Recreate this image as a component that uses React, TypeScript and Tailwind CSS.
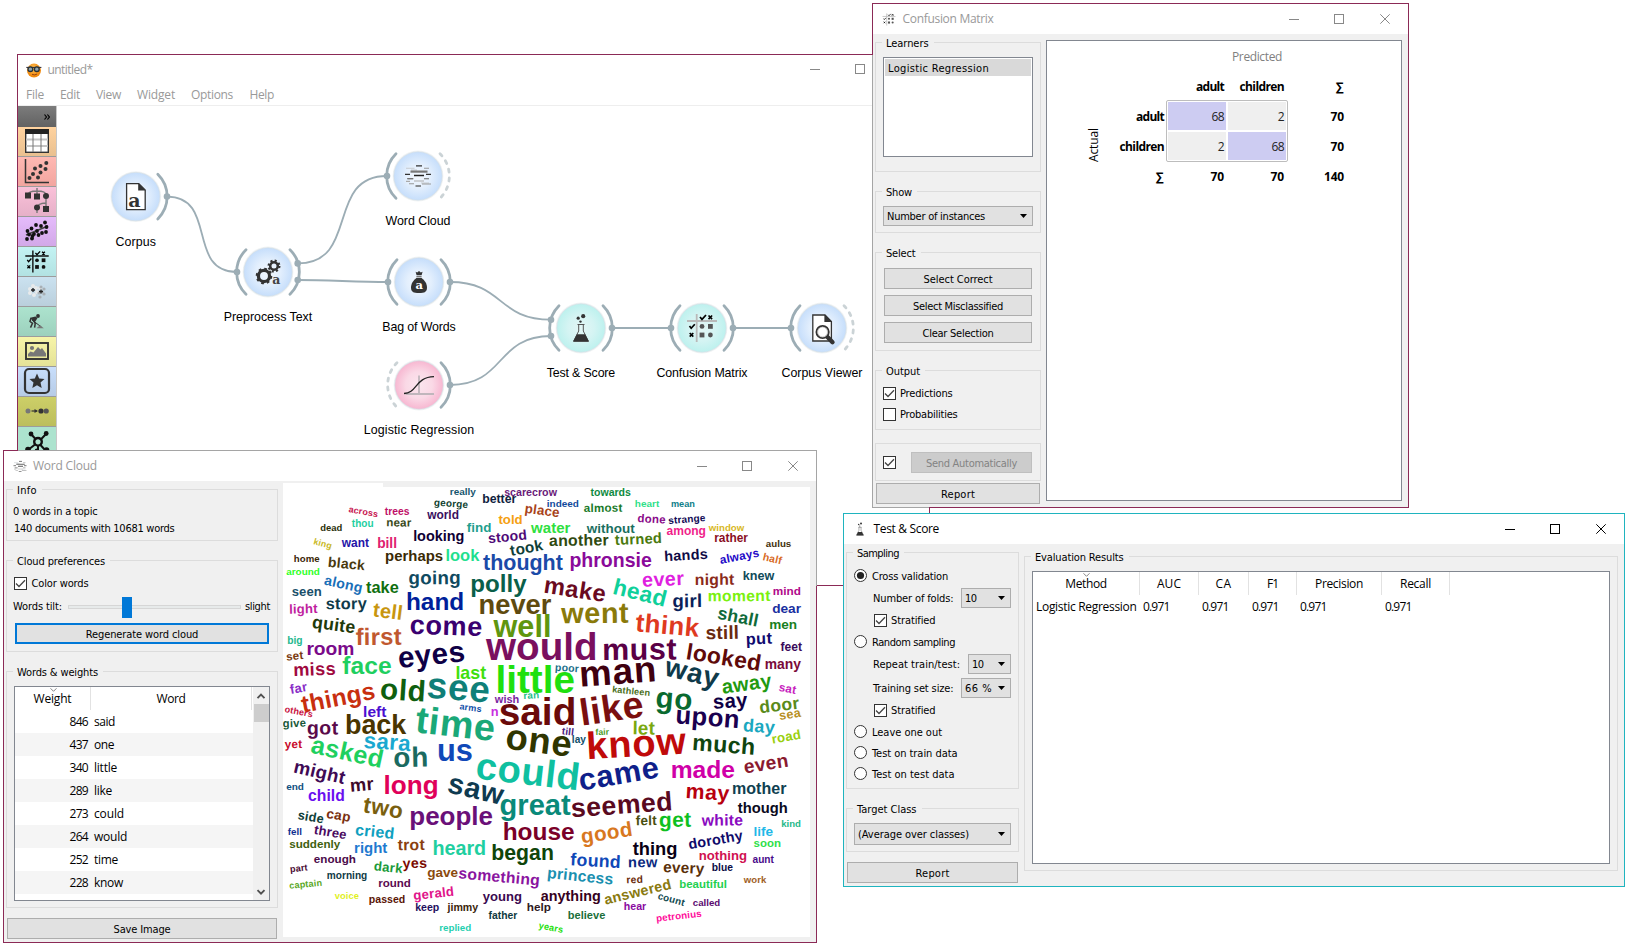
import React, { useLayoutEffect, useRef, useState } from "react";

/* --drop is the extra room above a line, which sets how low it sits in its row. */
const TAHOMA = "font-['DejaVu_Sans_Condensed','DejaVu_Sans',sans-serif] text-[11px] [--drop:2px]";
const SEGOE = "font-['Open_Sans','Noto_Sans',sans-serif] text-[12px] [--drop:0px]";

/* A single line of text whose tracking is adjusted so that it spans w pixels. */
function T({ w, children, className = "" }: { w: number; children: string; className?: string }) {
  const ref = useRef<HTMLSpanElement>(null);
  const [spacing, setSpacing] = useState<number | null>(null);
  useLayoutEffect(() => {
    const el = ref.current;
    if (!el || spacing !== null) return;
    setSpacing((w - parseFloat(getComputedStyle(el).width)) / children.length);
  }, [w, children, spacing]);
  return (
    <span ref={ref} className={`inline-block pt-(--drop) whitespace-pre ${className}`} style={{ letterSpacing: `${spacing ?? 0}px` }}>
      {children}
    </span>
  );
}

function Group({ title, tw, className, children }: { title?: string; tw?: number; className: string; children?: React.ReactNode }) {
  return (
    <div className={`flex shrink-0 flex-col items-start border border-[#dcdcdc] ${className}`}>
      {title && (
        <div className="-mt-[7px] ml-[6px] flex h-[14px] shrink-0 items-center bg-[#f0f0f0] pr-[5px] pl-[4px] leading-[14px]">
          <T w={tw ?? 40}>{title}</T>
        </div>
      )}
      {children}
    </div>
  );
}

function Button({ label, w, className }: { label: string; w: number; className: string }) {
  return (
    <button className={`flex h-[21px] shrink-0 items-center justify-center leading-[14px] ${className}`}>
      <T w={w}>{label}</T>
    </button>
  );
}
const PLAIN = "border border-[#adadad] bg-[#e1e1e1]";

function Combo({ label, w, className }: { label: string; w: number; className: string }) {
  return (
    <div className={`flex shrink-0 items-center justify-between border border-[#adadad] bg-[#e1e1e1] pr-[5px] pl-[3px] leading-[14px] ${className}`}>
      <T w={w}>{label}</T>
      <svg width="7" height="4" viewBox="0 0 7 4">
        <path d="M0 0H7L3.5 4Z" fill="#000" />
      </svg>
    </div>
  );
}

function Check({ on }: { on?: boolean }) {
  return (
    <svg width="13" height="13" viewBox="0 0 13 13" className="shrink-0">
      <rect x=".5" y=".5" width="12" height="12" fill="#fff" stroke="#333" />
      {on && <path d="M2 6.5L5 9.5L11 3.2" fill="none" stroke="#444" strokeWidth="1.3" />}
    </svg>
  );
}

function Radio({ on, label, w, className }: { on?: boolean; label: string; w: number; className: string }) {
  return (
    <div className={`ml-[7px] flex h-[15px] shrink-0 items-center gap-[5px] leading-[14px] ${className}`}>
      <svg width="13" height="13" viewBox="0 0 13 13">
        <circle cx="6.5" cy="6.5" r="6" fill="#fff" stroke="#333" />
        {on && <circle cx="6.5" cy="6.5" r="3.6" fill="#222" />}
      </svg>
      <T w={w}>{label}</T>
    </div>
  );
}

function Controls({ color, noClose }: { color: string; noClose?: boolean }) {
  return (
    <svg width="102" height="12" viewBox="0 0 102 12" className="shrink-0" fill="none" stroke={color}>
      <path d="M0 6.5H10" />
      <rect x="45.5" y="1.5" width="9" height="9" />
      {!noClose && <path d="M91.3 1.3L100.7 10.7M100.7 1.3L91.3 10.7" />}
    </svg>
  );
}

function SortMark({ className }: { className: string }) {
  return (
    <svg width="7" height="4" viewBox="0 0 7 4" className={`absolute top-px ${className}`}>
      <path d="M.5 .3L3.5 3.3L6.5 .3" fill="none" stroke="#777" strokeWidth=".9" />
    </svg>
  );
}

/* ------------------------------------------------------------------ */
/* Drawing pieces                                                      */
/* ------------------------------------------------------------------ */

function ConfusionGlyph({ line = "#b9b9b9", ink = "#555" }: { line?: string; ink?: string }) {
  return (
    <g>
      <path d="M-15 -7H15M-5.3 -14V14" stroke={line} strokeWidth="1.8" />
      <path d="M-2 -11l2 2.4l4 -4.4M-12.5 -2l1.7 2.2l3.6 -4" fill="none" stroke="#000" strokeWidth="1.7" />
      <path d="M6.5 -12.5l3.6 3.6m0 -3.6l-3.6 3.6M-12.3 5l3.6 3.6m0 -3.6l-3.6 3.6" stroke="#000" strokeWidth="1.7" />
      <g fill={ink}>
        <circle cx="0" cy="-1.6" r="2.4" />
        <rect x="6" y="-4" width="4.8" height="4.8" />
        <rect x="-2.4" y="4.6" width="4.8" height="4.8" />
        <circle cx="8.4" cy="7" r="2.4" />
      </g>
    </g>
  );
}

function CloudGlyph() {
  return (
    <g fill="none" strokeWidth="1.1">
      <path d="M-2 -10.2H4M-13 -1.6H-8M8 -1.6H13" stroke="#333" strokeWidth="1.3" />
      <path d="M-12 -7.7H-3.5M3 7H11M-7 -6H-1" stroke="#c5c9ce" />
      <path d="M6 -7.7H11M-10 2.6H-4.5M-9 7.8H-4M4 8H13" stroke="#999" />
      <path d="M-7.5 -4.4H9.5" stroke="#777" strokeWidth="2.2" />
      <path d="M-4 -.5H6" stroke="#222" strokeWidth="1.5" />
      <path d="M-11 2.8H-5M6 2.7H11" stroke="#666" />
      <path d="M-12 5.4H-8M-4 5H6" stroke="#aaa" />
      <path d="M-2.5 10H3" stroke="#555" strokeWidth="1.3" />
    </g>
  );
}

function FlaskGlyph() {
  return (
    <g>
      <path d="M-3.5 -3.5H3.5M-2.3 -3.5V3L-7.3 13H7.3L2.3 3V-3.5" fill="none" stroke="#555" strokeWidth="1" />
      <path d="M-4.2 6.3H4.2L8 13.8H-8Z" fill="#333" />
      <g fill="#333">
        <circle cx="-.5" cy="-6.4" r="1.2" />
        <circle cx="-2.8" cy="-9.8" r="1.6" />
        <circle cx="2.2" cy="-11.8" r="2.1" />
      </g>
    </g>
  );
}

function Page() {
  return (
    <g>
      <path d="M-9.2 -13H3L9.4 -6.6V13H-9.2Z" fill="#fff" stroke="#333" strokeWidth="1.3" />
      <path d="M2.4 -13.4L9.8 -6H2.4Z" fill="#333" />
    </g>
  );
}

function Gear({ cx, cy, r }: { cx: number; cy: number; r: number }) {
  const rim = r - 2.6;
  const step = (2 * Math.PI * (r - 1)) / 8;
  return (
    <g transform={`translate(${cx} ${cy})`} fill="none" stroke="#333">
      <circle r={rim} strokeWidth={r * 0.4} />
      <circle r={r - 1} strokeWidth="2.2" strokeDasharray={`${step * 0.48} ${step * 0.52}`} />
    </g>
  );
}

type NodeSpec = {
  x: number; y: number; kind: "blue" | "pink" | "teal"; label: string; lw: number; ly: number;
  left?: "solid" | "dash"; right?: "solid" | "dash"; glyph: React.ReactNode;
};

const NODES: NodeSpec[] = [
  {
    x: 135.8, y: 196.6, kind: "blue", label: "Corpus", lw: 40.5, ly: 246, right: "solid",
    glyph: (<><Page /><text x="-1.5" y="10" fontSize="19" fontWeight="bold" textAnchor="middle" fill="#333" fontFamily="'DejaVu Serif', serif">a</text></>),
  },
  {
    x: 268, y: 272, kind: "blue", label: "Preprocess Text", lw: 88.5, ly: 321, left: "solid", right: "solid",
    glyph: (<><Gear cx={-4} cy={4} r={8.2} /><Gear cx={6} cy={-6} r={6.4} /><text x="8.4" y="12" fontSize="12.5" fontWeight="bold" textAnchor="middle" fill="#444" fontFamily="'DejaVu Serif', serif">a</text></>),
  },
  { x: 418, y: 176, kind: "blue", label: "Word Cloud", lw: 65, ly: 225, left: "solid", right: "dash", glyph: <CloudGlyph /> },
  {
    x: 419, y: 282, kind: "blue", label: "Bag of Words", lw: 73.5, ly: 331, left: "solid", right: "solid",
    glyph: (
      <>
        <path d="M-3.4 -10.2L-1.8 -9.4L0 -11L1.8 -9.4L3.6 -10.2L2.6 -6.8H-2.4Z" fill="#333" />
        <path d="M-2.6 -5.3H2.6" stroke="#777" strokeWidth="1.4" />
        <path d="M-2.6 -4H2.6C5.5 -1.8 8 1.6 8 5.4C8 9.6 5.6 11 0 11S-8 9.6 -8 5.4C-8 1.6 -5.5 -1.8 -2.6 -4Z" fill="#333" />
        <text x="0.2" y="7.4" fontSize="11.5" fontWeight="bold" textAnchor="middle" fill="#fff" fontFamily="'DejaVu Serif', serif">a</text>
      </>
    ),
  },
  {
    x: 419, y: 385, kind: "pink", label: "Logistic Regression", lw: 110.5, ly: 434, left: "dash", right: "solid",
    glyph: (
      <>
        <path d="M0 -9.5V9M-13.5 9H15" stroke="#c0b6bc" strokeWidth="1.8" fill="none" />
        <path d="M-15 8.5C-2 8.5 -4 -8 15 -8.4" stroke="#222" strokeWidth="1.3" fill="none" />
      </>
    ),
  },
  { x: 581, y: 328, kind: "teal", label: "Test & Score", lw: 68.5, ly: 377, left: "solid", right: "solid", glyph: <FlaskGlyph /> },
  { x: 702, y: 328, kind: "teal", label: "Confusion Matrix", lw: 91, ly: 377, left: "solid", right: "solid", glyph: <ConfusionGlyph /> },
  {
    x: 822, y: 328, kind: "blue", label: "Corpus Viewer", lw: 81, ly: 377, left: "solid", right: "dash",
    glyph: (
      <>
        <Page />
        <path d="M5.5 9L10.5 14.2" stroke="#333" strokeWidth="4.4" strokeLinecap="round" />
        <circle cx=".6" cy="4" r="6.2" fill="#fff" stroke="#333" strokeWidth="1.8" />
        <circle cx=".6" cy="4" r="4.9" fill="none" stroke="#999" strokeWidth=".5" />
      </>
    ),
  },
];

function Arc({ side, mode }: { side: "left" | "right"; mode: "solid" | "dash" }) {
  const s = side === "left" ? -1 : 1;
  return (
    <path
      d={`M${22 * s} -22.3A31.3 31.3 0 0 ${s === 1 ? 1 : 0} ${22 * s} 22.3`}
      fill="none"
      stroke={mode === "solid" ? "#9cadb5" : "#cbd3d6"}
      strokeWidth="2.8"
      strokeLinecap="round"
      strokeDasharray={mode === "dash" ? "3 5.9" : undefined}
    />
  );
}

const DOTS = [
  [167, 196.6], [237, 272], [297.7, 263.4], [297.7, 280], [387, 176], [388, 282], [450, 282], [450, 385],
  [551, 319.7], [551, 336], [612, 328], [671, 328], [733, 328], [791, 328],
];

function Workflow() {
  return (
    <svg width="815" height="345" viewBox="57 106 815 345" className="shrink-0">
      <defs>
        <radialGradient id="blue"><stop offset="0" stopColor="#f3f8fe" /><stop offset=".5" stopColor="#e3effd" /><stop offset="1" stopColor="#c6defb" /></radialGradient>
        <radialGradient id="pink"><stop offset="0" stopColor="#fbe6ee" /><stop offset=".55" stopColor="#fad9e6" /><stop offset="1" stopColor="#f7b7d1" /></radialGradient>
        <radialGradient id="teal"><stop offset="0" stopColor="#e4f6f5" /><stop offset=".55" stopColor="#d4f4f3" /><stop offset="1" stopColor="#bdf1ee" /></radialGradient>
      </defs>
      <g fill="none" stroke="#9cadb5" strokeWidth="1.8">
        <path d="M167 196.6C218 196.6 186 272 237 272" />
        <path d="M297.7 263.4C360 263.4 325 176 387 176" />
        <path d="M297.7 280C330 280 355 282 388 282" />
        <path d="M450 282C504 282 497 319.7 551 319.7" />
        <path d="M450 385C506 385 495 336 551 336" />
        <path d="M612 328H671M733 328H791" />
      </g>
      {NODES.map((n) => (
        <g key={n.label}>
          <g transform={`translate(${n.x} ${n.y})`}>
            <circle r="25.4" fill="#e9eef0" opacity=".7" />
            <circle r="24.2" fill={`url(#${n.kind})`} stroke="#d3dde4" strokeWidth=".6" />
            {n.left && <Arc side="left" mode={n.left} />}
            {n.right && <Arc side="right" mode={n.right} />}
            {n.glyph}
          </g>
          <text x={n.x - n.lw / 2} y={n.ly} textLength={n.lw} fontSize="12.4" fontFamily="'Liberation Sans', sans-serif" fill="#000">
            {n.label}
          </text>
        </g>
      ))}
      {DOTS.map(([x, y], i) => <circle key={i} cx={x} cy={y} r="3.3" fill="#9cadb5" />)}
    </svg>
  );
}

const TOOLS: { bg: string; glyph: React.ReactNode }[] = [
  {
    bg: "bg-linear-to-b from-[#ffd39f] to-[#e9c090]",
    glyph: (
      <>
        <rect x="-11.3" y="-11.3" width="22.6" height="22.6" fill="#fff" stroke="#333" strokeWidth="1.4" />
        <path d="M-11 -1.5H11M-11 5H11" stroke="#c4c4c4" strokeWidth="1.8" />
        <path d="M-4 -8V11M4 -8V11" stroke="#777" />
        <path d="M-12 -9.5H12" stroke="#222" strokeWidth="5" />
      </>
    ),
  },
  {
    bg: "bg-linear-to-b from-[#ffb9b3] to-[#f2a59f]",
    glyph: (
      <>
        <path d="M-11.5 -12V11.5H12" fill="none" stroke="#333" strokeWidth="1.5" />
        <g fill="#333">{[[-7.5, 7], [-4, 3], [-2, -2.5], [1, 6.5], [3.5, 1.5], [3.5, -5], [8.5, -2], [9.3, -8]].map(([x, y], i) => <circle key={i} cx={x} cy={y} r="2" />)}</g>
      </>
    ),
  },
  {
    bg: "bg-linear-to-b from-[#fac1d9] to-[#e6b0c8]",
    glyph: (
      <>
        <path d="M-9 -6C-9 -9 -4 -10 0 -10S9 -9 9 -6M0 -13V-5M9 -5V8M9 2C5 2 0 3 0 8V12" fill="none" stroke="#777" strokeWidth="1.4" />
        <g fill="#333"><rect x="-12" y="-8.5" width="6" height="6" /><rect x="-3" y="-7.5" width="6" height="6" /><circle cx="9" cy="-5" r="3" /><circle cx="0" cy="6.5" r="3" /><rect x="6" y="5" width="6" height="6" /></g>
      </>
    ),
  },
  {
    bg: "bg-linear-to-b from-[#e5bbfb] to-[#d2a8e8]",
    glyph: (
      <>
        <path d="M-11 4L11 -5" stroke="#444" strokeWidth="1.5" />
        <g fill="#111">{[[-9.5, 0], [-10, 8], [-8, 3.5], [-5.5, -2.5], [-5, 7.5], [-3, 3], [-1, -6], [0, 0], [4, -5], [5, 2], [8, -8.5], [9.5, -4], [9, 1], [-4.5, 5], [1.5, 4]].map(([x, y], i) => <circle key={i} cx={x} cy={y} r="1.9" />)}</g>
      </>
    ),
  },
  { bg: "bg-linear-to-b from-[#c3f3f3] to-[#b2e2e2]", glyph: <g transform="translate(0 .5) scale(.78)"><ConfusionGlyph line="#111" ink="#111" /></g> },
  {
    bg: "bg-linear-to-b from-[#cbe2f0] to-[#bacfdc]",
    glyph: (
      <>
        <g fill="#e8eaeb">{[[-4, -5], [-7, -2], [-7, 2], [-3, 4], [0, 1], [-1, -3], [3, -3]].map(([x, y], i) => <circle key={i} cx={x} cy={y} r="2" />)}</g>
        <g fill="#a9b0b5">{[[4, -4], [7, -2], [7, 3], [3, 6], [2, 2], [5, 1]].map(([x, y], i) => <circle key={i} cx={x} cy={y} r="1.6" />)}</g>
        <path d="M-4 -3V1M-6 -1H-2M4 -1.5V2.5M2 .5H6" stroke="#222" strokeWidth="1.3" />
      </>
    ),
  },
  {
    bg: "bg-linear-to-b from-[#ace3ce] to-[#9dd1bd]",
    glyph: (
      <>
        <circle cx="1" cy="-5" r="1.9" fill="#333" />
        <path d="M-6.8 -3.2L-1.5 -4.6L.5 -3L-1.6 .6L-3.6 .8Z" fill="#333" />
        <path d="M-6 -3L-7 .5L-4.5 2.2L-6.5 6.6M-3 0L-1.8 2.6L-2.4 6.6" fill="none" stroke="#333" strokeWidth="1.5" />
        <path d="M-5 -1L4.4 6" fill="none" stroke="#333" strokeWidth="1" />
        <path d="M-.5 7.2L3 4.2L6.8 7.2Z" fill="#777" />
      </>
    ),
  },
  {
    bg: "bg-linear-to-b from-[#f7f5a9] to-[#e4e297]",
    glyph: (
      <>
        <rect x="-11" y="-8" width="22" height="16" fill="none" stroke="#333" strokeWidth="1.9" />
        <path d="M-9 5.5V3L-6.5 .5L-3.5 1.5L1 -4L3.5 -1.5L5 -3L9 2.5V5.5Z" fill="#777" />
        <circle cx="-5" cy="-3" r="2.1" fill="#777" />
      </>
    ),
  },
  {
    bg: "bg-linear-to-b from-[#c9dffc] to-[#b6cbe6]",
    glyph: (
      <>
        <rect x="-12" y="-12" width="24" height="24" rx="4" fill="none" stroke="#333" strokeWidth="2.2" />
        <path d="M0 -7.5L2.2 -2.5L7.5 -2L3.5 1.6L4.7 7L0 4.2L-4.7 7L-3.5 1.6L-7.5 -2L-2.2 -2.5Z" fill="#333" />
      </>
    ),
  },
  {
    bg: "bg-linear-to-b from-[#cdcf68] to-[#bcbe5c]",
    glyph: (
      <>
        <path d="M-5.5 0H0" stroke="#333" strokeWidth="1.2" /><path d="M-2.5 -2L1 0L-2.5 2Z" fill="#333" />
        <circle cx="-9" cy="0" r="2.5" fill="#777" /><circle cx="4" cy="0" r="2.6" fill="#333" /><circle cx="9.2" cy="0" r="2.6" fill="#555" />
      </>
    ),
  },
  {
    bg: "bg-[#ace3ce]",
    glyph: (
      <>
        <circle cx="1" cy=".8" r="3.8" fill="none" stroke="#111" strokeWidth="2.4" />
        <path d="M-1.5 -2L-6 -7M3.8 -1.5L9 -7M-2 3.5L-9 9M3.5 4L9 10M1 5V9" stroke="#111" strokeWidth="2" />
        <g fill="#111"><circle cx="-6" cy="-7" r="2.4" /><circle cx="9.2" cy="-7.5" r="2.4" /><circle cx="-9" cy="8.5" r="2.8" /><circle cx="0" cy="10" r="2.4" /><circle cx="9.5" cy="9" r="2.8" /></g>
      </>
    ),
  },
];

/* ------------------------------------------------------------------ */
/* Word cloud                                                          */
/* ------------------------------------------------------------------ */

type Word = [string, number, number, number, number, string];

/* Each tile has its own origin on the desktop; word entries hold the two ends
   of the baseline in thirds of a pixel, followed by the fill. */
const TILES: { ox: number; oy: number; words: Word[] }[] = [
  {
    ox: 280, oy: 480, words: [
      ["really", 510, 46, 587, 46, "#16566e"], ["scarecrow", 673, 47, 830, 47, "#6a1b7a"], ["better", 607, 68, 708, 68, "#0f2340"],
      ["george", 462, 77, 563, 84, "#0f3f2f"], ["indeed", 801, 80, 896, 80, "#124a9c"], ["place", 733, 98, 836, 112, "#a8431a"],
      ["world", 442, 116, 536, 116, "#3a1060"], ["told", 656, 131, 727, 131, "#f5a011"], ["across", 205, 96, 292, 112, "#c8144f"],
      ["trees", 315, 104, 388, 104, "#c01068"], ["thou", 216, 140, 280, 140, "#1fcf9f"], ["near", 319, 139, 393, 140, "#3a4a20"],
      ["dead", 121, 152, 186, 152, "#2a2f0a"], ["find", 561, 155, 633, 155, "#1f9f8f"], ["looking", 400, 184, 552, 184, "#0f0035"],
      ["stood", 626, 190, 741, 178, "#4f0a78"], ["water", 754, 158, 870, 158, "#2fdf3f"], ["king", 99, 192, 152, 207, "#c8b81f"],
      ["want", 186, 200, 266, 200, "#2414a8"], ["bill", 292, 204, 350, 204, "#e0206f"], ["took", 694, 228, 790, 210, "#0f4038"],
      ["another", 808, 198, 985, 196, "#2f4a0f"], ["perhaps", 316, 243, 488, 243, "#3a2a05"], ["look", 497, 243, 597, 243, "#1fdf8f"],
      ["thought", 610, 271, 847, 271, "#1a4aa8"], ["home", 42, 247, 118, 247, "#3a2505"], ["black", 143, 260, 252, 271, "#4a3a0f"],
      ["around", 19, 284, 119, 284, "#2fff1f"], ["along", 131, 314, 243, 338, "#1a6fb8"], ["take", 259, 338, 355, 338, "#0f6f0f"],
      ["going", 386, 313, 541, 312, "#0f4a5f"], ["polly", 572, 337, 738, 337, "#0a5f4a"], ["make", 790, 338, 972, 366, "#6a0a1f"],
      ["seen", 36, 347, 124, 347, "#1a4f6a"], ["light", 28, 401, 112, 399, "#c01f9f"], ["story", 138, 388, 259, 387, "#0f3a4a"],
      ["tell", 278, 409, 364, 420, "#c8960f"], ["hand", 379, 389, 551, 389, "#001f9a"], ["never", 597, 402, 812, 402, "#5f4a0f"],
      ["quite", 95, 443, 222, 460, "#1f3a0a"], ["come", 390, 461, 604, 468, "#3a0070"], ["well", 642, 470, 812, 470, "#5f960f"],
      ["first", 228, 495, 363, 494, "#c0582f"], ["big", 22, 493, 67, 493, "#1fb88f"], ["room", 80, 524, 222, 524, "#7a0a8a"],
      ["eyes", 358, 564, 555, 543, "#0f0045"], ["would", 620, 541, 950, 541, "#7a0f5f"], ["set", 20, 542, 70, 537, "#7a3a10"],
      ["miss", 41, 588, 166, 584, "#a00a3f"], ["face", 188, 582, 333, 582, "#1fcf5f"], ["last", 527, 597, 617, 597, "#3fdf0f"],
      ["little", 648, 639, 882, 639, "#1fe00f"], ["old", 300, 656, 433, 665, "#0f5f0f"], ["see", 440, 653, 624, 668, "#0f7f78"],
      ["far", 33, 642, 82, 633, "#8a2fc8"], ["things", 70, 698, 287, 656, "#c82f0f"], ["wish", 645, 668, 717, 668, "#7a1fa0"],
      ["ran", 731, 657, 777, 655, "#1fbf8a"], ["n", 633, 709, 655, 709, "#c82fdf"], ["arms", 538, 688, 603, 696, "#0f4fa8"],
      ["others", 13, 696, 96, 712, "#c81040"], ["left", 250, 711, 318, 711, "#4a0fd0"],
    ],
  },
  {
    ox: 550, oy: 440, words: [
      ["towards", 122, 167, 242, 167, "#0f8a3f"], ["almost", 102, 216, 216, 215, "#1a7a2a"], ["heart", 255, 200, 327, 200, "#2fdf8a"],
      ["mean", 363, 200, 434, 200, "#0f7f8a"], ["done", 262, 246, 345, 251, "#8a0a8a"], ["strange", 356, 252, 466, 243, "#0f0a55"],
      ["without", 111, 278, 253, 278, "#1a6f5f"], ["among", 350, 285, 467, 285, "#f01f8a"], ["window", 477, 272, 582, 272, "#d8b81f"],
      ["turned", 196, 315, 335, 309, "#4a7a0f"], ["rather", 493, 307, 593, 307, "#8a0f1f"], ["aulus", 648, 321, 723, 321, "#3f300a"],
      ["phronsie", 59, 382, 304, 382, "#8a0a9a"], ["hands", 344, 364, 473, 356, "#0f0a45"], ["always", 512, 372, 628, 350, "#1f0ac8"],
      ["half", 637, 360, 692, 373, "#d86a1f"], ["ever", 278, 440, 401, 435, "#e01fe0"], ["night", 435, 435, 552, 434, "#8a2a1a"],
      ["knew", 579, 420, 672, 420, "#0f4a5a"], ["head", 186, 461, 342, 500, "#0fd09a"], ["girl", 368, 502, 455, 501, "#0a1f5a"],
      ["moment", 474, 484, 660, 483, "#7af00f"], ["mind", 669, 466, 752, 466, "#b00a8a"], ["dear", 667, 518, 752, 518, "#1a2fa0"],
      ["went", 35, 550, 234, 548, "#8a7a0a"], ["think", 256, 574, 443, 590, "#df3a1f"], ["shall", 501, 536, 620, 560, "#0f6a3a"],
      ["still", 468, 598, 566, 596, "#6a2a0f"], ["men", 658, 567, 740, 567, "#1a7f1f"], ["put", 589, 614, 665, 611, "#0f0a6f"],
      ["must", 158, 660, 378, 658, "#5a0045"], ["looked", 407, 657, 628, 693, "#5f0a0a"], ["feet", 692, 633, 755, 633, "#3a0a5a"],
      ["many", 645, 688, 752, 688, "#7a0a3a"], ["poor", 15, 692, 85, 697, "#1a6f8a"], ["man", 92, 740, 318, 724, "#3f000f"],
      ["way", 342, 706, 497, 743, "#0f3a4a"], ["away", 519, 761, 665, 741, "#1f9a0f"], ["sat", 685, 752, 735, 762, "#c81fc0"],
      ["kathleen", 186, 757, 299, 768, "#4a6f1a"], ["go", 316, 802, 423, 810, "#0a6a2f"], ["say", 491, 806, 592, 800, "#0f0045"],
      ["door", 631, 820, 748, 806, "#5a8a1a"],
    ],
  },
  {
    ox: 280, oy: 700, words: [
      ["said", 658, 74, 886, 74, "#6a0a0a"], ["give", 9, 82, 77, 80, "#1a5a3a"], ["got", 82, 104, 173, 103, "#5a0a4a"],
      ["back", 196, 101, 377, 101, "#4a3500"], ["time", 405, 97, 638, 123, "#1aa878"], ["sara", 251, 143, 389, 153, "#1aa8d0"],
      ["yet", 15, 145, 66, 144, "#c80a2a"], ["asked", 90, 158, 302, 204, "#1fd05f"], ["oh", 342, 201, 443, 199, "#1a6a60"],
      ["us", 472, 184, 576, 184, "#1048b8"], ["one", 675, 146, 868, 170, "#2f3500"], ["could", 586, 236, 892, 271, "#0fc0a0"],
      ["might", 39, 217, 189, 252, "#3f0a55"], ["mr", 212, 275, 281, 269, "#3f0a2a"], ["long", 312, 281, 474, 281, "#e0005a"],
      ["saw", 500, 276, 661, 314, "#0f3a50"], ["great", 660, 346, 870, 346, "#0a8a7a"], ["end", 19, 271, 71, 271, "#0f4f80"],
      ["child", 85, 302, 193, 302, "#6a0ff0"], ["two", 248, 336, 363, 356, "#7a5f0f"], ["people", 389, 376, 637, 376, "#6a1078"],
      ["side", 52, 357, 128, 370, "#0f3f3a"], ["cap", 138, 353, 208, 366, "#7a2f0f"], ["fell", 24, 404, 65, 404, "#0f2f90"],
      ["three", 101, 401, 196, 418, "#4a0a60"], ["cried", 225, 405, 340, 417, "#0fa0c0"], ["house", 669, 420, 882, 420, "#7a0028"],
      ["suddenly", 28, 445, 180, 445, "#3f5f0f"], ["right", 223, 460, 321, 460, "#1f7ad0"], ["trot", 354, 451, 433, 450, "#8a3f0f"],
      ["heard", 458, 464, 617, 464, "#1fcfa0"], ["began", 635, 480, 820, 480, "#0f450a"], ["enough", 102, 489, 227, 489, "#4a0a4a"],
      ["part", 31, 517, 83, 511, "#4a0a35"], ["dark", 281, 511, 365, 520, "#1a9a3a"], ["yes", 369, 505, 440, 503, "#7a0a00"],
      ["gave", 442, 530, 533, 530, "#8a4a0f"], ["something", 535, 535, 777, 557, "#8a14a0"], ["morning", 141, 536, 261, 536, "#0f3a45"],
      ["captain", 29, 566, 126, 557, "#5aa81f"], ["round", 295, 560, 392, 560, "#5a0a50"], ["voice", 165, 596, 236, 596, "#dff01f"],
      ["passed", 267, 608, 375, 608, "#5a1505"], ["gerald", 402, 600, 522, 587, "#e0148a"], ["young", 609, 603, 725, 603, "#3a0a50"],
      ["anything", 783, 603, 961, 603, "#350020"], ["keep", 406, 632, 477, 632, "#1f1060"], ["jimmy", 503, 632, 594, 632, "#3a250a"],
      ["help", 741, 633, 812, 633, "#2f1a1f"], ["father", 626, 656, 711, 656, "#0f3a40"], ["replied", 478, 692, 573, 692, "#1fcfb0"],
      ["years", 775, 685, 847, 699, "#1fdf0f"], ["princess", 801, 534, 997, 554, "#1a90b0"],
    ],
  },
  {
    ox: 550, oy: 700, words: [
      ["like", 96, 77, 282, 50, "#7a0f0f"], ["upon", 376, 70, 565, 84, "#1a0050"], ["sea", 690, 60, 753, 50, "#b8901f"],
      ["day", 579, 94, 672, 100, "#1aa8c0"], ["let", 248, 103, 313, 104, "#7aa80f"], ["till", 35, 103, 70, 107, "#4a1a80"],
      ["fair", 137, 105, 177, 104, "#4a9a1f"], ["lay", 66, 130, 107, 130, "#0f4f6a"], ["road", 668, 131, 753, 116, "#9ad00f"],
      ["know", 113, 178, 407, 161, "#c00a0a"], ["much", 426, 150, 612, 164, "#0f450f"], ["came", 93, 272, 328, 232, "#0f1f8a"],
      ["made", 363, 234, 553, 234, "#d000a8"], ["even", 585, 220, 716, 200, "#8a1a2f"], ["may", 407, 294, 535, 302, "#b8000f"],
      ["mother", 547, 282, 708, 282, "#0f3f50"], ["seemed", 66, 352, 367, 330, "#5a0a1f"], ["though", 564, 339, 712, 339, "#0a0a20"],
      ["felt", 258, 376, 319, 375, "#4a4f0f"], ["get", 328, 381, 422, 380, "#0fc01f"], ["white", 456, 377, 578, 376, "#8a0ac0"],
      ["kind", 694, 381, 752, 381, "#1fb88a"], ["life", 611, 407, 668, 407, "#1fb8e8"], ["good", 97, 430, 248, 407, "#d8781f"],
      ["dorothy", 418, 448, 579, 420, "#0f0a6a"], ["soon", 611, 440, 692, 440, "#2fdf4a"], ["thing", 249, 465, 381, 465, "#0a0015"],
      ["nothing", 447, 480, 590, 480, "#d01050"], ["aunt", 608, 488, 671, 488, "#4a0a8a"], ["found", 61, 496, 210, 504, "#0f48b8"],
      ["new", 235, 502, 321, 501, "#0a2a80"], ["every", 340, 516, 461, 522, "#5a300a"], ["blue", 486, 512, 548, 512, "#0a0a45"],
      ["red", 230, 550, 278, 548, "#6a2a0a"], ["work", 582, 548, 648, 548, "#a0601f"], ["beautiful", 388, 564, 530, 564, "#1fd050"],
      ["answered", 167, 614, 365, 566, "#8a7a0f"], ["count", 322, 596, 400, 618, "#0f4a50"], ["called", 429, 619, 510, 619, "#5a0a70"],
      ["hear", 222, 631, 288, 631, "#8a0aa0"], ["believe", 54, 656, 165, 656, "#1a6f3a"], ["petronius", 320, 665, 455, 650, "#ff0a9a"],
    ],
  },
];

const ADVANCE: Record<string, number> = {
  a: 0.556, b: 0.611, c: 0.556, d: 0.611, e: 0.556, f: 0.333, g: 0.611, h: 0.611, i: 0.278, j: 0.278, k: 0.556, l: 0.278, m: 0.889,
  n: 0.611, o: 0.611, p: 0.611, q: 0.611, r: 0.389, s: 0.556, t: 0.333, u: 0.611, v: 0.556, w: 0.778, x: 0.556, y: 0.556, z: 0.5,
};

function WordCloud() {
  return (
    <svg width="527" height="454" viewBox="283 483 527 454" className="mt-[2px] ml-[5px] shrink-0">
      <path d="M283 483H383V487H810V937H283Z" fill="#fff" />
      <g fontFamily="'Liberation Sans', Arial, sans-serif" fontWeight="bold">
        {TILES.flatMap((t, ti) =>
          t.words.map(([word, x1, y1, x2, y2, fill]) => {
            const ink = Math.hypot(x2 - x1, y2 - y1) / 3;
            const em = word.split("").reduce((s, c) => s + ADVANCE[c], 0);
            const size = (ink / (em - 0.04)) * (y1 === y2 ? 1 : 0.975);
            const angle = (Math.atan2(y2 - y1, x2 - x1) * 180) / Math.PI;
            return (
              <text
                key={`${ti}-${word}`}
                transform={`translate(${t.ox + x1 / 3} ${t.oy + y1 / 3}) rotate(${angle})`}
                x={-0.015 * size}
                fontSize={size}
                textLength={ink + 0.04 * size}
                fill={fill}
              >
                {word}
              </text>
            );
          }),
        )}
      </g>
    </svg>
  );
}

/* ------------------------------------------------------------------ */
/* Windows                                                             */
/* ------------------------------------------------------------------ */

const MENU: [string, number, string][] = [
  ["File", 18, "ml-[8px]"], ["Edit", 20, "ml-[16px]"], ["View", 25, "ml-[16px]"],
  ["Widget", 38, "ml-[16px]"], ["Options", 42, "ml-[16px]"], ["Help", 24.5, "ml-[16.5px]"],
];

function MainWindow() {
  return (
    <div className={`absolute top-[54px] left-[17px] flex h-[532px] w-[913px] flex-col overflow-hidden border border-[#8b2a56] bg-white text-[#999] ${SEGOE}`}>
      <div className="flex h-[30px] shrink-0 items-center pl-[8px]">
        <svg width="16" height="15" viewBox="0 0 16 15">
          <defs><radialGradient id="face" cx=".45" cy=".35"><stop offset="0" stopColor="#ffc65a" /><stop offset="1" stopColor="#f08a10" /></radialGradient></defs>
          <circle cx="8" cy="7.6" r="7" fill="url(#face)" />
          <path d="M.3 4.4H15.4" stroke="#223" strokeWidth="1" />
          <ellipse cx="4.4" cy="6.2" rx="2.4" ry="2.3" fill="#8fa3ad" stroke="#26323a" strokeWidth="1.3" />
          <ellipse cx="10.8" cy="6.2" rx="2.4" ry="2.3" fill="#8fa3ad" stroke="#26323a" strokeWidth="1.3" />
          <path d="M6 11.3Q8.5 12.6 11 11.1" fill="none" stroke="#8a3a10" strokeWidth=".9" />
        </svg>
        <T w={45} className="ml-[5.5px]">untitled*</T>
        <div className="mt-[-2px] ml-[717px] flex"><Controls color="#888" noClose /></div>
      </div>
      <div className="flex h-[21px] shrink-0 items-center border-b border-[#eee] leading-[16px]">
        {MENU.map(([m, w, ml]) => <T key={m} w={w} className={ml}>{m}</T>)}
      </div>
      <div className="flex">
        <div className="flex w-[39px] shrink-0 flex-col border-r border-[#c8c8c8]">
          <div className="flex h-[21px] items-center justify-end bg-linear-to-b from-[#7c7c7c] to-[#626262] pr-[6px]">
            <svg width="6" height="6" viewBox="0 0 6 6"><path d="M.5 .5L2.5 3L.5 5.5M3.4 .5L5.4 3L3.4 5.5" fill="none" stroke="#000" strokeWidth="1.2" /></svg>
          </div>
          {TOOLS.map((t, i) => (
            <div key={i} className={`flex h-[30px] items-center justify-center border-b border-[#9c9c9c] pb-px ${t.bg}`}>
              <svg width="28" height="28" viewBox="-14 -14 28 28">{t.glyph}</svg>
            </div>
          ))}
        </div>
        <Workflow />
      </div>
    </div>
  );
}

const BOLD = "font-bold text-[12px] leading-[16px]";

function ConfusionWindow() {
  return (
    <div className={`absolute top-[3px] left-[872px] flex h-[505px] w-[537px] flex-col border border-[#8b2a56] bg-[#f0f0f0] text-black ${TAHOMA}`}>
      <div className="absolute top-[51px] -left-px h-[453px] w-px bg-[#a5a5a5]" />
      <div className="absolute -bottom-px -left-px h-px w-[57px] bg-[#a5a5a5]" />
      <div className={`flex h-[30px] shrink-0 items-center bg-white pr-[17px] pl-[9px] text-[#999] ${SEGOE}`}>
        <svg width="14" height="13" viewBox="-16 -15 32 30"><ConfusionGlyph /></svg>
        <T w={91} className="mr-auto ml-[6.5px]">Confusion Matrix</T>
        <div className="-mt-px flex"><Controls color="#888" /></div>
      </div>
      <div className="flex">
        <div className="ml-[2px] flex w-[166px] shrink-0 flex-col">
          <Group title="Learners" tw={42.5} className="mt-[8px] h-[130px]">
            <div className="mt-[7px] ml-[7px] h-[100px] w-[150px] border border-[#828790] bg-white p-px">
              <div className="flex h-[17px] items-center bg-[#d9d9d9] pt-px pl-[3px]"><T w={101}>Logistic Regression</T></div>
            </div>
          </Group>
          <Group title="Show" tw={26} className="mt-[19px] h-[42px]">
            <Combo label="Number of instances" w={98} className="mt-[7px] ml-[7px] h-[20px] w-[150px]" />
          </Group>
          <Group title="Select" tw={29.5} className="mt-[19px] h-[99px]">
            <div className="mt-[8px] ml-[8px] flex flex-col gap-[6px]">
              <Button label="Select Correct" w={69} className={`w-[148px] ${PLAIN}`} />
              <Button label="Select Misclassified" w={90} className={`w-[148px] ${PLAIN}`} />
              <Button label="Clear Selection" w={71} className={`w-[148px] ${PLAIN}`} />
            </div>
          </Group>
          <Group title="Output" tw={34} className="mt-[19px] h-[60px]">
            <div className="mt-[9px] ml-[7px] flex h-[13px] items-center gap-[4px]"><Check on /><T w={52.5}>Predictions</T></div>
            <div className="mt-[8px] ml-[7px] flex h-[13px] items-center gap-[4px]"><Check /><T w={57.5}>Probabilities</T></div>
          </Group>
          <Group className="mt-[13px] h-[38px]">
            <div className="mt-[8px] ml-[7px] flex items-center gap-[15px]">
              <Check on />
              <Button label="Send Automatically" w={91} className="w-[121px] border border-[#bfbfbf] bg-[#ccc] text-[#838383]" />
            </div>
          </Group>
          <Button label="Report" w={34} className={`mt-[2px] ml-px w-[164px] ${PLAIN}`} />
        </div>
        <div className={`mt-[6px] ml-[5px] flex h-[461px] w-[356px] shrink-0 flex-col items-start border border-[#828790] bg-white ${SEGOE}`}>
          <div className="mt-[8px] ml-[185px] h-[16px] leading-[16px] text-[#808080]"><T w={50}>Predicted</T></div>
          <div className="mt-[6px] ml-[40px] grid grid-cols-[14px_66px_60px_60px_60px] grid-rows-[30px_30px_30px_30px] items-center justify-items-end">
            <div className="col-start-1 row-span-2 row-start-2 mt-[28px] flex h-[34px] w-[14px] items-center justify-center justify-self-center">
              <div className="-rotate-90 leading-[14px]"><T w={34}>Actual</T></div>
            </div>
            <div className={`col-start-3 row-start-1 pt-[2px] pr-[3px] ${BOLD}`}><T w={28}>adult</T></div>
            <div className={`col-start-4 row-start-1 pt-[2px] pr-[3px] ${BOLD}`}><T w={44.5}>children</T></div>
            <div className={`col-start-5 row-start-1 pt-[2px] pr-[3px] ${BOLD}`}><T w={8}>∑</T></div>
            <div className={`col-start-2 row-start-2 pt-[2px] pr-[3px] ${BOLD}`}><T w={28}>adult</T></div>
            <div className={`col-start-2 row-start-3 pt-[2px] pr-[3px] ${BOLD}`}><T w={44.5}>children</T></div>
            <div className={`col-start-2 row-start-4 pt-[2px] pr-[3px] ${BOLD}`}><T w={8}>∑</T></div>
            <div className="col-span-2 col-start-3 row-span-2 row-start-2 -m-px grid h-[62px] w-[122px] grid-cols-2 gap-[2px] rounded-[2px] border border-[#bdbdbd] p-px text-[#222]">
              {["68", "2", "2", "68"].map((v, i) => (
                <div key={i} className={`flex items-center justify-end pt-[2px] pr-[2px] ${v === "68" ? "bg-[#cdccf2]" : "bg-[#efefef]"}`}>
                  <T w={v.length * 6.2}>{v}</T>
                </div>
              ))}
            </div>
            <div className={`col-start-5 row-start-2 pt-[2px] pr-[3px] ${BOLD}`}><T w={13.5}>70</T></div>
            <div className={`col-start-5 row-start-3 pt-[2px] pr-[3px] ${BOLD}`}><T w={13.5}>70</T></div>
            <div className={`col-start-3 row-start-4 pt-[2px] pr-[3px] ${BOLD}`}><T w={13.5}>70</T></div>
            <div className={`col-start-4 row-start-4 pt-[2px] pr-[3px] ${BOLD}`}><T w={13.5}>70</T></div>
            <div className={`col-start-5 row-start-4 pt-[2px] pr-[3px] ${BOLD}`}><T w={20}>140</T></div>
          </div>
        </div>
      </div>
    </div>
  );
}

const HEADS: [string, number, string][] = [
  ["Method", 41.5, "w-[107px]"], ["AUC", 24, "w-[59px]"], ["CA", 16, "w-[50px]"], ["F1", 11, "w-[48px]"], ["Precision", 48, "w-[85px]"], ["Recall", 31, "w-[68px]"],
];

function TestScoreWindow() {
  return (
    <div className={`absolute top-[513px] left-[843px] flex h-[374px] w-[782px] flex-col border border-[#1fb4bf] bg-[#f0f0f0] text-black ${TAHOMA}`}>
      <div className={`flex h-[30px] shrink-0 items-center bg-white pr-[17px] pl-[11px] ${SEGOE}`}>
        <svg width="10" height="14" viewBox="-10 -15 20 30"><FlaskGlyph /></svg>
        <T w={65.5} className="mr-auto ml-[8.5px]">Test &amp; Score</T>
        <div className="-mt-px flex"><Controls color="#000" /></div>
      </div>
      <div className="flex">
        <div className="ml-[2px] flex w-[173px] shrink-0 flex-col">
          <Group title="Sampling" tw={42} className="mt-[8px] h-[237px]">
            <Radio on label="Cross validation" w={76} className="mt-[8px]" />
            <div className="mt-[5px] ml-[26px] flex h-[20px] w-[138px] items-center justify-between"><T w={80.5}>Number of folds:</T><Combo label="10" w={11.5} className="h-[20px] w-[50px]" /></div>
            <div className="mt-[5px] ml-[27px] flex h-[15px] items-center gap-[4px]"><Check on /><T w={44.5}>Stratified</T></div>
            <Radio label="Random sampling" w={83} className="mt-[6px]" />
            <div className="mt-[5px] ml-[26px] flex h-[20px] w-[138px] items-center justify-between"><T w={87}>Repeat train/test:</T><Combo label="10" w={11.5} className="h-[20px] w-[43px]" /></div>
            <div className="mt-[4px] ml-[26px] flex h-[20px] w-[138px] items-center justify-between"><T w={80.5}>Training set size:</T><Combo label="66 %" w={27} className="h-[20px] w-[50px]" /></div>
            <div className="mt-[5px] ml-[27px] flex h-[15px] items-center gap-[4px]"><Check on /><T w={44.5}>Stratified</T></div>
            <Radio label="Leave one out" w={70} className="mt-[6px]" />
            <Radio label="Test on train data" w={85.5} className="mt-[6px]" />
            <Radio label="Test on test data" w={82.5} className="mt-[6px]" />
          </Group>
          <Group title="Target Class" tw={59.5} className="mt-[19px] h-[44px]">
            <Combo label="(Average over classes)" w={111} className="mt-[7px] ml-[7px] h-[22px] w-[157px]" />
          </Group>
          <Button label="Report" w={34} className={`mt-[10px] ml-px w-[171px] ${PLAIN}`} />
        </div>
        <Group title="Evaluation Results" tw={88.5} className="mt-[12px] ml-[5px] h-[315px] w-[594px]">
          <div className={`mt-[7px] ml-[7px] h-[293px] w-[578px] border border-[#828790] bg-white ${SEGOE}`}>
            <div className="relative flex h-[23px] leading-[16px]">
              {HEADS.map(([h, w, cw]) => (
                <div key={h} className={`flex shrink-0 items-center justify-center border-r border-[#e2e2e2] pt-px ${cw}`}><T w={w}>{h}</T></div>
              ))}
              <SortMark className="left-[50px]" />
            </div>
            <div className="flex h-[23px] items-center leading-[16px]">
              <div className="w-[107px] shrink-0 pl-[3px]"><T w={100.5}>Logistic Regression</T></div>
              {HEADS.slice(1).map(([h, , cw]) => (
                <div key={h} className={`shrink-0 pl-[3px] ${cw}`}><T w={26.5}>0.971</T></div>
              ))}
            </div>
          </div>
        </Group>
      </div>
    </div>
  );
}

const ROWS: [string, string, number][] = [
  ["846", "said", 21], ["437", "one", 20], ["340", "little", 23], ["289", "like", 18],
  ["273", "could", 30], ["264", "would", 33], ["252", "time", 24], ["228", "know", 29],
];

function WordCloudWindow() {
  return (
    <div className={`absolute top-[450px] left-[3px] flex h-[493px] w-[814px] flex-col border border-[#8b2a56] bg-[#f0f0f0] text-black ${TAHOMA}`}>
      <div className="absolute -top-px -right-px h-px w-[799px] bg-[#a5a5a5]" />
      <div className="absolute -top-px -right-px h-[136px] w-px bg-[#a5a5a5]" />
      <div className={`flex h-[30px] shrink-0 items-center bg-white pr-[17px] pl-[9px] text-[#999] ${SEGOE}`}>
        <svg width="14" height="13" viewBox="-14 -13 28 26"><CloudGlyph /></svg>
        <T w={64} className="mr-auto ml-[6px]">Word Cloud</T>
        <div className="-mt-px flex"><Controls color="#888" /></div>
      </div>
      <div className="flex">
        <div className="ml-[2px] flex w-[272px] shrink-0 flex-col">
          <Group title="Info" tw={20} className="mt-[8px] h-[52px]">
            <div className="mt-[6px] ml-[6px] flex h-[17px] items-center"><T w={84.5}>0 words in a topic</T></div>
            <div className="ml-[7px] flex h-[17px] items-center"><T w={160.5}>140 documents with 10681 words</T></div>
          </Group>
          <Group title="Cloud preferences" tw={88} className="mt-[19px] h-[92px]">
            <div className="mt-[8px] ml-[7px] flex h-[15px] items-center gap-[4.5px]"><Check on /><T w={57}>Color words</T></div>
            <div className="mt-[5px] ml-[6px] flex h-[21px] items-center">
              <T w={49}>Words tilt:</T>
              <div className="relative ml-[6px] h-[4px] w-[173px] border border-[#d6d6d6] bg-[#e7eaea]">
                <div className="absolute -top-[9px] left-[53px] h-[21px] w-[10px] bg-[#0078d7]" />
              </div>
              <T w={25} className="ml-[4px]">slight</T>
            </div>
            <Button label="Regenerate word cloud" w={112.5} className="mt-[6px] ml-[8px] w-[254px] border-2 border-[#0078d7] bg-[#e1e1e1]" />
          </Group>
          <Group title={"Words & weights"} tw={81} className="mt-[19px] h-[237px]">
            <div className={`mt-[7px] ml-[7px] flex h-[215px] w-[256px] border border-[#828790] bg-white ${SEGOE}`}>
              <div className="flex w-[238px] shrink-0 flex-col leading-[16px]">
                <div className="relative flex h-[23px]">
                  <div className="flex w-[76px] items-center justify-center border-r border-[#e2e2e2] pt-px"><T w={38}>Weight</T></div>
                  <div className="flex w-[161px] items-center justify-center border-r border-[#e2e2e2] pt-px"><T w={29}>Word</T></div>
                  <SortMark className="left-[35px]" />
                </div>
                {ROWS.map(([n, word, w], i) => (
                  <div key={n} className={`flex h-[23px] items-center ${i % 2 ? "bg-[#f5f5f5]" : ""}`}>
                    <div className="flex w-[73px] justify-end"><T w={18.5}>{n}</T></div>
                    <T w={w} className="ml-[6px]">{word}</T>
                  </div>
                ))}
              </div>
              <div className="flex w-[16px] shrink-0 flex-col items-center bg-[#f0f0f0]">
                <svg width="16" height="17" viewBox="0 0 16 17"><path d="M4.5 11.2L8 7.7L11.5 11.2" fill="none" stroke="#505050" strokeWidth="1.9" /></svg>
                <div className="h-[18px] w-[15px] bg-[#cdcdcd]" />
                <svg width="16" height="17" viewBox="0 0 16 17" className="mt-auto"><path d="M4.5 7.2L8 10.7L11.5 7.2" fill="none" stroke="#505050" strokeWidth="1.9" /></svg>
              </div>
            </div>
          </Group>
          <Button label="Save Image" w={57} className={`mt-[10px] ml-px w-[270px] ${PLAIN}`} />
        </div>
        <WordCloud />
      </div>
    </div>
  );
}

export default function App() {
  return (
    <div className="relative h-[946px] w-[1628px] overflow-hidden bg-white">
      <MainWindow />
      <WordCloudWindow />
      <ConfusionWindow />
      <TestScoreWindow />
    </div>
  );
}
